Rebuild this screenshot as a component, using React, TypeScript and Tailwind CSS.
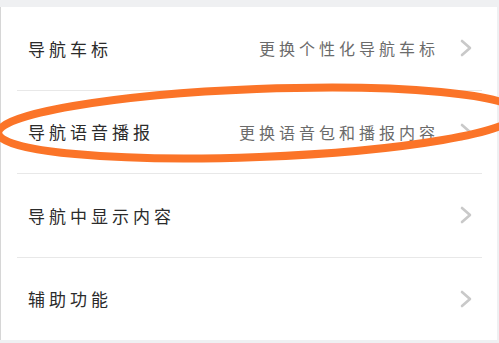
const rows = [
  { label: "导航车标", hint: "更换个性化导航车标" },
  { label: "导航语音播报", hint: "更换语音包和播报内容" },
  { label: "导航中显示内容", hint: "" },
  { label: "辅助功能", hint: "" },
];

function Chevron() {
  return (
    <svg width="12" height="18" viewBox="0 0 12 18" className="shrink-0">
      <path d="M2 2 L10 9 L2 16" fill="none" stroke="#c9c9c9" strokeWidth="2.6" strokeLinecap="round" strokeLinejoin="round" />
    </svg>
  );
}

export default function App() {
  return (
    <div
      className="relative w-[499px] h-[343px] overflow-hidden bg-[#eff0f2] pt-[7px] pr-[2px] pb-[3px]"
      style={{ fontFamily: '"Noto Sans CJK SC", "Noto Sans", sans-serif' }}
    >
      <div className="h-full flex flex-col bg-white border-l border-[#d6d6d6]">
        {rows.map((r, i) => (
          <div
            key={r.label}
            className={`flex-1 ml-[16px] mr-[15px] flex items-center pl-[11px] pr-[10px] ${
              i < rows.length - 1 ? "border-b border-[#e8e8e8]" : ""
            }`}
          >
            <span className="flex-1 text-[17px] tracking-[4px] text-[#2b2b2b]">{r.label}</span>
            {r.hint && (
              <span className="text-[16px] tracking-[4px] text-[#6b6b6b] mr-[21px]">{r.hint}</span>
            )}
            <Chevron />
          </div>
        ))}
      </div>
      <svg className="absolute inset-0 pointer-events-none" width="499" height="343" viewBox="0 0 499 343">
        <ellipse
          cx="258"
          cy="123"
          rx="260"
          ry="34"
          transform="rotate(-2.2 258 123)"
          fill="none"
          stroke="#fb7428"
          strokeWidth="8"
        />
      </svg>
    </div>
  );
}
